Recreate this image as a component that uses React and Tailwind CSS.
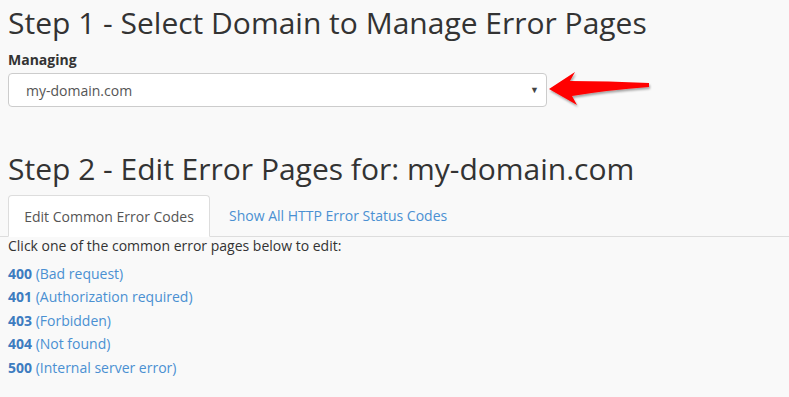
import React from 'react';

const codes = [
    ['400', 'Bad request'],
    ['401', 'Authorization required'],
    ['403', 'Forbidden'],
    ['404', 'Not found'],
    ['500', 'Internal server error'],
];

function RedArrow() {
    return (
        <svg width="106" height="38" viewBox="0 0 106 38" className="absolute left-[538px] top-[-2px]">
            <defs>
                <filter id="sh" x="-10%" y="-20%" width="130%" height="150%">
                    <feDropShadow dx="1" dy="2" stdDeviation="1.2" floodColor="#000" floodOpacity="0.35" />
                </filter>
            </defs>
            <path
                d="M3 18 L29 1 L24 10 Q62 10 103 12 L103 16 Q62 19 26 25 L31 34 Z"
                fill="#ff0000"
                filter="url(#sh)"
            />
        </svg>
    );
}

export default function App() {
    return (
        <div className="w-[789px] h-[397px] overflow-hidden bg-[#f9f9f9] text-[#333] font-['Open_Sans',sans-serif]">
            <div className="px-2">
                <h1 className="text-[30px] leading-[36px] pt-[5px] text-[#333]">Step 1 - Select Domain to Manage Error Pages</h1>
                <p className="text-[14px] font-bold mt-[9px] leading-[20px]">Managing</p>
                <div className="relative mt-[3px]">
                    <div className="w-[539px] h-[34px] bg-white border border-[#ccc] rounded-[4px] flex items-center justify-between pl-[17px] pr-[7px]">
                        <span className="text-[14px] text-[#555]">my-domain.com</span>
                        <span className="text-[9px] text-[#444]">▼</span>
                    </div>
                    <RedArrow />
                </div>
                <h1 className="text-[30px] leading-[36px] mt-[44px] text-[#333]">Step 2 - Edit Error Pages for: my-domain.com</h1>
            </div>
            <div className="mt-[8px] flex border-b border-[#ddd] pl-2 h-[42px]">
                <div className="w-[202px] h-[42px] bg-white border border-[#ddd] border-b-white rounded-t-[4px] flex items-center justify-center text-[14px] text-[#555] -mb-px">
                    Edit Common Error Codes
                </div>
                <div className="px-[19px] flex items-center text-[14px] text-[#4a90d2]">Show All HTTP Error Status Codes</div>
            </div>
            <div className="px-2 text-[14px]">
                <p className="leading-[18px] text-[#333]">Click one of the common error pages below to edit:</p>
                <ul className="mt-[7px]">
                    {codes.map(([code, label]) => (
                        <li key={code} className="leading-[23.4px] text-[#4a90d2]">
                            <span className="font-bold text-[#3d7cc0]">{code}</span> ({label})
                        </li>
                    ))}
                </ul>
            </div>
        </div>
    );
}
